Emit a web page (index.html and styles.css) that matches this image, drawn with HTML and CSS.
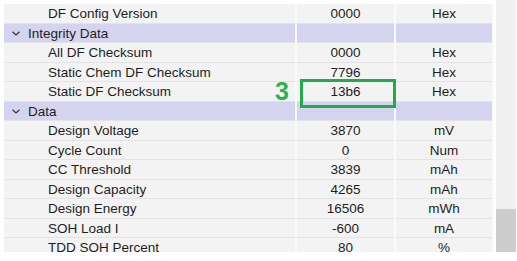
FILE: index.html
```html
<!DOCTYPE html>
<html lang="en">
<head>
    <meta charset="UTF-8" />
    <title>Data Memory</title>
    <link rel="stylesheet" href="styles.css">
</head>
<body>
    <div class="viewer">
        <div class="grid">
            <div class="row"><div class="name">DF Config Version</div><div class="val">0000</div><div class="unit">Hex</div></div>
            <div class="row group"><div class="name"><svg class="chev" width="8" height="5" viewBox="0 0 8 5"><polyline points="0.5,0.8 4,4 7.5,0.8" fill="none" stroke="#333" stroke-width="1.2"/></svg>Integrity Data</div><div class="val"></div><div class="unit"></div></div>
            <div class="row"><div class="name">All DF Checksum</div><div class="val">0000</div><div class="unit">Hex</div></div>
            <div class="row"><div class="name">Static Chem DF Checksum</div><div class="val">7796</div><div class="unit">Hex</div></div>
            <div class="row"><div class="name">Static DF Checksum</div><div class="val">13b6</div><div class="unit">Hex</div></div>
            <div class="row group"><div class="name"><svg class="chev" width="8" height="5" viewBox="0 0 8 5"><polyline points="0.5,0.8 4,4 7.5,0.8" fill="none" stroke="#333" stroke-width="1.2"/></svg>Data</div><div class="val"></div><div class="unit"></div></div>
            <div class="row"><div class="name">Design Voltage</div><div class="val">3870</div><div class="unit">mV</div></div>
            <div class="row"><div class="name">Cycle Count</div><div class="val">0</div><div class="unit">Num</div></div>
            <div class="row"><div class="name">CC Threshold</div><div class="val">3839</div><div class="unit">mAh</div></div>
            <div class="row"><div class="name">Design Capacity</div><div class="val">4265</div><div class="unit">mAh</div></div>
            <div class="row"><div class="name">Design Energy</div><div class="val">16506</div><div class="unit">mWh</div></div>
            <div class="row"><div class="name">SOH Load I</div><div class="val">-600</div><div class="unit">mA</div></div>
            <div class="row"><div class="name">TDD SOH Percent</div><div class="val">80</div><div class="unit">%</div></div>
        </div>
        <div class="scrollbar"><div class="thumb"></div></div>

        <!-- annotation over the grid -->
        <div class="callout-num">3</div>
        <div class="callout-box"></div>
    </div>
</body>
</html>
```

FILE: styles.css
```css
* {
    margin: 0;
    box-sizing: border-box;
}
body {
    background: #ffffff;
    font-family: "Liberation Sans", Arial, sans-serif;
}
.viewer {
    position: relative;
    display: flex;
    gap: 2px;
    width: 517px;
    height: 252px;
    padding: 4px 1px 0 4px;
    overflow: hidden;
}
.grid {
    width: 490px;
    flex: none;
    background: #f3f3f3;
}
.row {
    display: grid;
    grid-template-columns: 293px 99px 98px;
    height: 19.5px;
    border-bottom: 1px solid #e3e3e3;
    font-size: 13.5px;
    color: #1e1e1e;
    line-height: 18.5px;
}
.row > div {
    border-right: 2px solid #fafafa;
    white-space: nowrap;
    padding-top: 1px;
}
.name {
    padding-left: 44px;
}
.val, .unit {
    text-align: center;
}
.group {
    background: #d4d4f1;
}
.group .name {
    padding-left: 8px;
    display: flex;
    align-items: center;
    gap: 8px;
}
.chev {
    flex: none;
}
.scrollbar {
    width: 20px;
    flex: none;
    background: #f0f0f0;
    display: flex;
    flex-direction: column;
    justify-content: flex-end;
    margin-top: -4px;
}
.thumb {
    height: 43px;
    background: #cdcdcd;
}
.callout-box {
    position: absolute;
    left: 300px;
    top: 79px;
    width: 96px;
    height: 29px;
    border: 3px solid #23ab4b;
}
.callout-num {
    position: absolute;
    left: 275px;
    top: 77px;
    font-size: 25px;
    font-weight: bold;
    color: #2db34e;
    line-height: 28px;
}
```
